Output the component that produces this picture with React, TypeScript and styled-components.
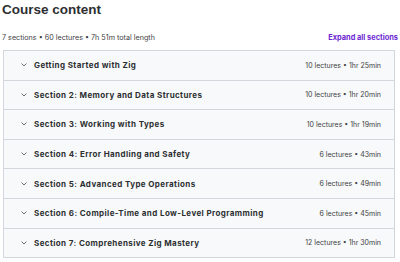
import React from "react";
import styled, { createGlobalStyle } from "styled-components";

const GlobalStyle = createGlobalStyle`
  html, body {
    margin: 0;
    padding: 0;
    background: #ffffff;
  }
  body {
    font-family: Inter, "Noto Sans", sans-serif;
    color: #2d2f31;
  }
`;

interface Section {
  title: string;
  lectures: number;
  length: string;
}

const sections: Section[] = [
  { title: "Getting Started with Zig", lectures: 10, length: "1hr 25min" },
  { title: "Section 2: Memory and Data Structures", lectures: 10, length: "1hr 20min" },
  { title: "Section 3: Working with Types", lectures: 10, length: "1hr 19min" },
  { title: "Section 4: Error Handling and Safety", lectures: 6, length: "43min" },
  { title: "Section 5: Advanced Type Operations", lectures: 6, length: "49min" },
  { title: "Section 6: Compile-Time and Low-Level Programming", lectures: 6, length: "45min" },
  { title: "Section 7: Comprehensive Zig Mastery", lectures: 12, length: "1hr 30min" },
];

const Chevron = () => (
  <svg width="6" height="4" viewBox="0 0 6 4" fill="none">
    <path d="M0.8 0.8l2.2 2.2 2.2-2.2" stroke="#6a6f73" strokeWidth="1" strokeLinecap="round" strokeLinejoin="round" />
  </svg>
);

const App = () => {
  return (
    <>
      <GlobalStyle />
      <Wrapper>
        <Title>Course content</Title>
        <Summary>
          <span>7 sections • 60 lectures • 7h 51m total length</span>
          <ExpandLink>Expand all sections</ExpandLink>
        </Summary>
        <SectionList>
          {sections.map((s) => (
            <SectionRow key={s.title}>
              <ChevronBox>
                <Chevron />
              </ChevronBox>
              <SectionTitle>{s.title}</SectionTitle>
              <SectionMeta>
                {s.lectures} lectures • {s.length}
              </SectionMeta>
            </SectionRow>
          ))}
        </SectionList>
      </Wrapper>
    </>
  );
};

const Wrapper = styled.div`
  width: 400px;
  padding: 0 5px 0 3px;
  box-sizing: border-box;
`;

const Title = styled.h2`
  margin: 0 0 0 -1px;
  padding-top: 1px;
  font-family: "Liberation Sans", Arial, sans-serif;
  font-size: 13.5px;
  line-height: 18px;
  font-weight: 700;
  color: #2d2f31;
`;

const Summary = styled.div`
  display: flex;
  justify-content: space-between;
  align-items: center;
  margin: 11px -3px 0 -1px;
  height: 14px;
  font-size: 7.2px;
  color: #3e4143;
`;

const ExpandLink = styled.span`
  color: #6d28d2;
  font-weight: 700;
  font-size: 7.4px;
`;

const SectionList = styled.div`
  margin-top: 6px;
  border: 1px solid #d1d7dc;
  border-bottom: none;
`;

const SectionRow = styled.div`
  display: flex;
  align-items: center;
  height: 28.6px;
  background: #f7f9fa;
  border-bottom: 1px solid #d1d7dc;
  padding: 0 13px 0 17px;
`;

const ChevronBox = styled.span`
  display: flex;
  width: 13px;
`;

const SectionTitle = styled.span`
  flex: 1;
  font-size: 8px;
  font-weight: 700;
  letter-spacing: 0.4px;
  color: #2d2f31;
`;

const SectionMeta = styled.span`
  font-size: 7px;
  color: #3e4143;
`;

export default App;
